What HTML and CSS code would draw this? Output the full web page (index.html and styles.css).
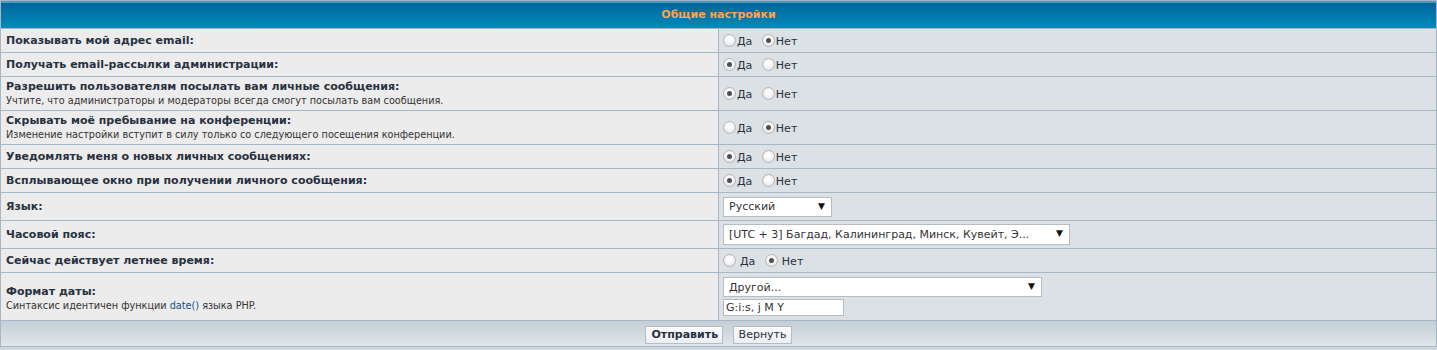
FILE: index.html
```html
<!DOCTYPE html>
<html lang="ru">
<head>
    <meta charset="UTF-8">
    <title>Общие настройки</title>
    <link rel="stylesheet" href="styles.css">
</head>
<body>
    <form class="prefs">
        <table class="tablebg">
            <tr class="row-head">
                <th colspan="2">Общие настройки</th>
            </tr>
            <tr class="row-one">
                <td class="row1"><b class="label">Показывать мой адрес email:</b></td>
                <td class="row2">
                    <label><input type="radio" name="viewemail">Да</label>
                    <label><input type="radio" name="viewemail" checked>Нет</label>
                </td>
            </tr>
            <tr class="row-one">
                <td class="row1"><b class="label">Получать email-рассылки администрации:</b></td>
                <td class="row2">
                    <label><input type="radio" name="massemail" checked>Да</label>
                    <label><input type="radio" name="massemail">Нет</label>
                </td>
            </tr>
            <tr class="row-two">
                <td class="row1">
                    <b class="label">Разрешить пользователям посылать вам личные сообщения:</b><br>
                    <span class="explain">Учтите, что администраторы и модераторы всегда смогут посылать вам сообщения.</span>
                </td>
                <td class="row2">
                    <label><input type="radio" name="allowpm" checked>Да</label>
                    <label><input type="radio" name="allowpm">Нет</label>
                </td>
            </tr>
            <tr class="row-two">
                <td class="row1">
                    <b class="label">Скрывать моё пребывание на конференции:</b><br>
                    <span class="explain">Изменение настройки вступит в силу только со следующего посещения конференции.</span>
                </td>
                <td class="row2">
                    <label><input type="radio" name="hideonline">Да</label>
                    <label><input type="radio" name="hideonline" checked>Нет</label>
                </td>
            </tr>
            <tr class="row-one">
                <td class="row1"><b class="label">Уведомлять меня о новых личных сообщениях:</b></td>
                <td class="row2">
                    <label><input type="radio" name="notifypm" checked>Да</label>
                    <label><input type="radio" name="notifypm">Нет</label>
                </td>
            </tr>
            <tr class="row-one">
                <td class="row1"><b class="label">Всплывающее окно при получении личного сообщения:</b></td>
                <td class="row2">
                    <label><input type="radio" name="popuppm" checked>Да</label>
                    <label><input type="radio" name="popuppm">Нет</label>
                </td>
            </tr>
            <tr class="row-select">
                <td class="row1"><b class="label">Язык:</b></td>
                <td class="row2">
                    <span class="dropdown dd-lang">
                        <select><option>Русский</option></select>
                    </span>
                </td>
            </tr>
            <tr class="row-select">
                <td class="row1"><b class="label">Часовой пояс:</b></td>
                <td class="row2">
                    <span class="dropdown dd-tz">
                        <select><option>[UTC + 3] Багдад, Калининград, Минск, Кувейт, Э...</option></select>
                    </span>
                </td>
            </tr>
            <tr class="row-one">
                <td class="row1"><b class="label">Сейчас действует летнее время:</b></td>
                <td class="row2 spaced">
                    <label><input type="radio" name="dst"> Да</label>
                    <label><input type="radio" name="dst" checked> Нет</label>
                </td>
            </tr>
            <tr class="row-date">
                <td class="row1">
                    <b class="label">Формат даты:</b><br>
                    <span class="explain">Синтаксис идентичен функции <a href="#">date()</a> языка PHP.</span>
                </td>
                <td class="row2">
                    <span class="dropdown dd-date">
                        <select><option>Другой...</option></select>
                    </span>
                    <input type="text" class="inputbox" value="G:i:s, j M Y">
                </td>
            </tr>
            <tr class="row-foot">
                <td class="cat" colspan="2">
                    <button type="button" class="btnmain">Отправить</button>
                    <button type="button" class="btnlite">Вернуть</button>
                </td>
            </tr>
        </table>
    </form>
</body>
</html>
```

FILE: styles.css
```css
html {
    background: #cdd6dc;
}
body {
    margin: 0;
    font-family: "DejaVu Sans", Verdana, sans-serif;
    color: #28313f;
}
.tablebg {
    width: 1437px;
    border-collapse: separate;
    border-spacing: 1px;
    background: #a6b6c4;
}
th {
    height: 27px;
    padding: 0;
    font-size: 11px;
    font-weight: bold;
    color: #ffa34f;
    background: linear-gradient(#4d97bd 0, #4d97bd 2px, #00669a 2px, #0489bb 100%);
}
td {
    padding: 0 4px;
    font-size: 11px;
    vertical-align: middle;
}
.row1 {
    width: 50%;
    background: #ececec;
    padding-left: 5px;
}
.row2 {
    background: #dce1e5;
}
.row-one { height: 23px; }
.row-two { height: 33px; }
.row-select { height: 27px; }
.row-date { height: 47px; }
.row-foot { height: 25px; }
.row-date .row1 {
    padding-top: 4px;
}

.label {
    font-size: 11px;
    line-height: 14px;
}
.explain {
    font-size: 9.7px;
    line-height: 13px;
    color: #333;
}
.explain a {
    color: #105289;
    text-decoration: none;
}

/* radios */
.row2 label {
    display: inline-flex;
    align-items: center;
    margin-right: 6px;
    font-size: 11px;
    padding-top: 2px;
}
.row2 input[type=radio] {
    appearance: none;
    width: 13px;
    height: 13px;
    margin: 0 1px 2px 0;
    border: 1px solid #b6b6b6;
    border-radius: 50%;
    background: radial-gradient(circle at 50% 40%, #fbfbfb 30%, #dadada 100%);
    box-sizing: border-box;
    position: relative;
}
.row2 input[type=radio]:checked::after {
    content: "";
    position: absolute;
    left: 3px;
    top: 3px;
    width: 5px;
    height: 5px;
    border-radius: 50%;
    background: #4e4e4e;
}
.spaced label {
    margin-right: 6px;
}
.spaced input[type=radio] {
    margin-right: 4px;
}

/* selects */
.dropdown {
    display: block;
    position: relative;
}
.dropdown select {
    appearance: none;
    display: block;
    height: 20px;
    padding: 0 5px;
    border: 1px solid #b4bcc4;
    background: #fff;
    font-family: "DejaVu Sans", Verdana, sans-serif;
    font-size: 11px;
    color: #333;
}
.dropdown::after {
    content: "▼";
    position: absolute;
    top: 4px;
    font-size: 9px;
    color: #111;
    pointer-events: none;
}
.dd-lang select { width: 109px; }
.dd-lang::after { left: 95px; }
.dd-tz select { width: 347px; height: 21px; }
.dd-tz::after { left: 333px; }
.dd-date select { width: 319px; }
.dd-date::after { left: 305px; }
.inputbox {
    display: block;
    margin-top: 2px;
    width: 121px;
    height: 17px;
    box-sizing: border-box;
    padding: 0 2px;
    border: 1px solid #b4bcc4;
    font-family: "DejaVu Sans", Verdana, sans-serif;
    font-size: 11px;
    color: #333;
}

/* footer */
.cat {
    text-align: center;
    padding: 0;
    background: linear-gradient(#c3ced6, #e0e6ea);
}
.cat button {
    height: 18px;
    margin: 2px 3px 0;
    padding: 0 4px 0 5px;
    border: 1px solid #b4bcc4;
    background: linear-gradient(#fafbfc, #eceff2);
    font-family: "DejaVu Sans", Verdana, sans-serif;
    font-size: 11px;
    color: #28313f;
}
.btnmain {
    font-weight: bold;
}
```
